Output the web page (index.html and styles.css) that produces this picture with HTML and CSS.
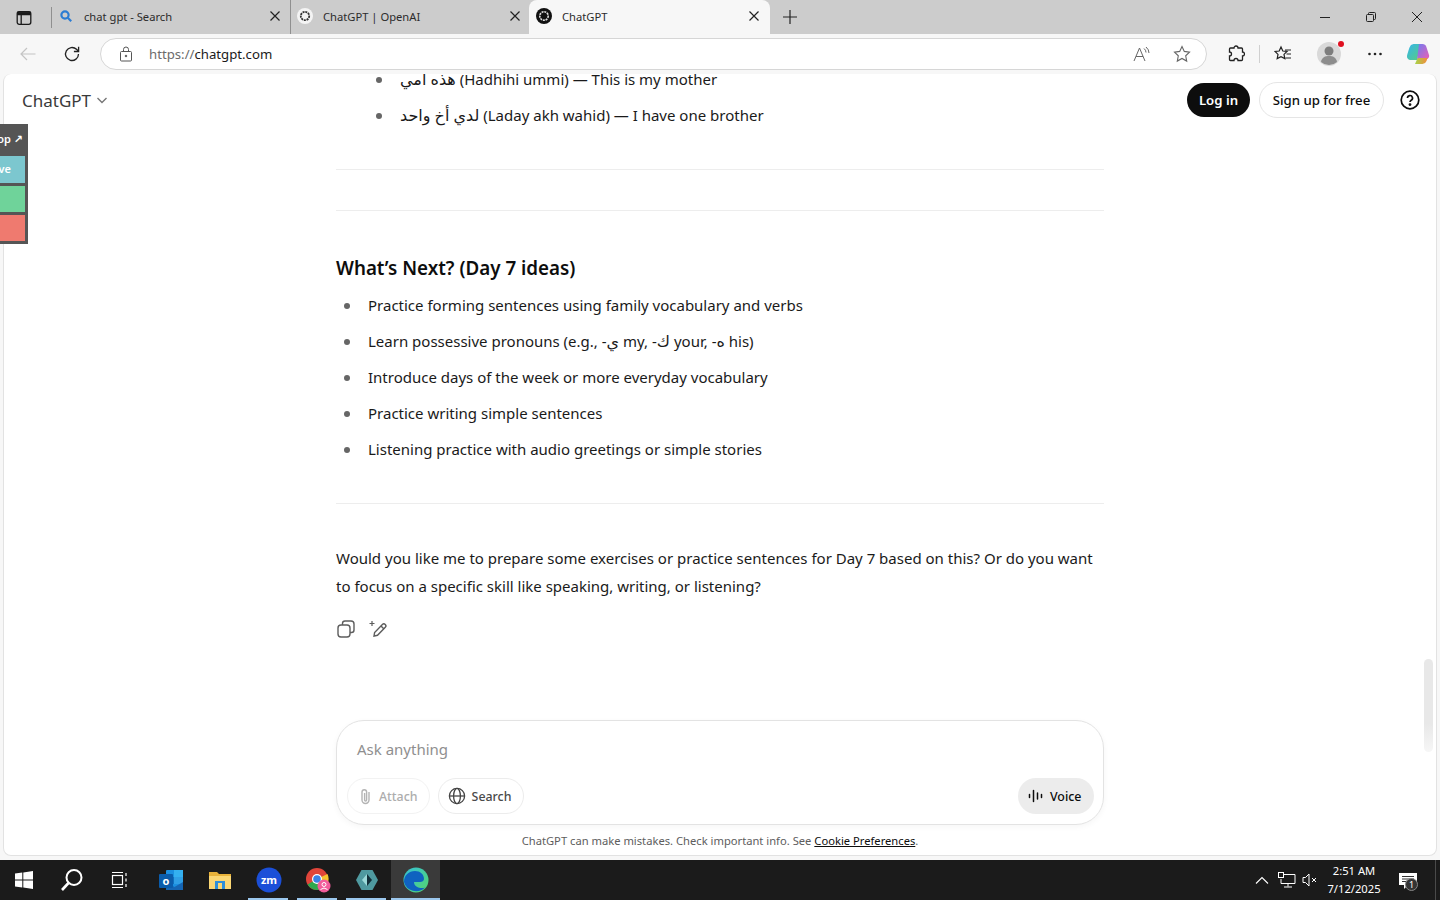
FILE: index.html
```html
<!DOCTYPE html>
<html lang="en">
<head>
    <meta charset="UTF-8">
    <meta name="viewport" content="width=device-width, initial-scale=1.0">
    <title>ChatGPT</title>
    <link rel="stylesheet" href="styles.css">
</head>
<body>

    <!-- Tab strip -->
    <div class="tabstrip">
        <div class="tab-menu">
            <svg width="16" height="16" viewBox="0 0 16 16" fill="none" stroke="#1a1a1a" stroke-width="1.3"><rect x="1.2" y="1.7" width="13.6" height="12.6" rx="2"/><path d="M1.5 4.6h13M5.2 4.6v9.5"/><path d="M2 2.2h12v2.2H2z" fill="#1a1a1a"/></svg>
        </div>
        <div class="tab">
            <svg class="favicon" width="16" height="16" viewBox="-1 -1 16 16" fill="none" stroke="#2b7cd3" stroke-width="2.2"><circle cx="6" cy="6" r="3.6"/><path d="M8.8 8.8l3.4 3.4"/></svg>
            <span class="tab-title">chat gpt - Search</span>
            <svg class="tab-close" width="10" height="10" viewBox="0 0 10 10" stroke="#222" stroke-width="1.2"><path d="M.5.5l9 9M9.500.5l-9 9"/></svg>
        </div>
        <div class="tab">
            <svg class="favicon" width="16" height="16" viewBox="0 0 16 16"><circle cx="8" cy="8" r="8" fill="#f4f4f4"/><circle cx="8" cy="8" r="4.2" fill="none" stroke="#333" stroke-width="1.8" stroke-dasharray="2 .8"/></svg>
            <span class="tab-title">ChatGPT | OpenAI</span>
            <svg class="tab-close" width="10" height="10" viewBox="0 0 10 10" stroke="#222" stroke-width="1.2"><path d="M.5.5l9 9M9.500.5l-9 9"/></svg>
        </div>
        <div class="tab tab-active">
            <svg class="favicon" width="16" height="16" viewBox="0 0 16 16"><circle cx="8" cy="8" r="8" fill="#111"/><circle cx="8" cy="8" r="4.2" fill="none" stroke="#ddd" stroke-width="1.6" stroke-dasharray="2 .8"/></svg>
            <span class="tab-title">ChatGPT</span>
            <svg class="tab-close" width="10" height="10" viewBox="0 0 10 10" stroke="#222" stroke-width="1.2"><path d="M.5.5l9 9M9.500.5l-9 9"/></svg>
        </div>
        <div class="tab-new">
            <svg width="14" height="14" viewBox="0 0 14 14" stroke="#222" stroke-width="1.2"><path d="M7 0v14M0 7h14"/></svg>
        </div>
        <div class="window-controls">
            <div class="window-btn"><svg width="10" height="10" viewBox="0 0 10 10" stroke="#222"><path d="M0 5.5h10"/></svg></div>
            <div class="window-btn"><svg width="10" height="10" viewBox="0 0 10 10" fill="none" stroke="#222"><rect x=".5" y="2.5" width="7" height="7" rx="1"/><path d="M2.5 2.5V1.5a1 1 0 0 1 1-1h5a1 1 0 0 1 1 1v5a1 1 0 0 1-1 1h-1"/></svg></div>
            <div class="window-btn"><svg width="10" height="10" viewBox="0 0 10 10" stroke="#222"><path d="M0 0l10 10M10 0L0 10"/></svg></div>
        </div>
    </div>

    <!-- Address bar -->
    <div class="toolbar">
        <div class="nav-btns">
            <svg width="16" height="16" viewBox="0 0 16 16" fill="none" stroke="#c4c4c4" stroke-width="1.2"><path d="M15.5 8H1M7 2L1 8l6 6"/></svg>
            <svg width="18" height="18" viewBox="0 0 18 18" fill="none" stroke="#222" stroke-width="1.3"><path d="M15.5 9a6.5 6.5 0 1 1-2-4.7L15.5 6.300"/><path d="M15.600 1.800v4.700h-4.700"/></svg>
        </div>
        <div class="urlbar">
            <svg class="lock" width="14" height="16" viewBox="0 0 14 16" fill="none" stroke="#555"><rect x="1.500" y="5.500" width="11" height="9.500" rx="1"/><path d="M4.500 5.500V3.500a2.500 2.500 0 0 1 5 0v2"/><circle cx="7" cy="10" r=".8" fill="#555"/></svg>
            <span class="url"><span class="url-dim">https://</span>chatgpt.com</span>
            <svg class="url-icon" width="18" height="16" viewBox="0 0 18 16" fill="none" stroke="#666"><path d="M1 15L6.500 2 12 15M3 10.500h7"/><path d="M11 2.500q2 1.500 2 4M13 1q3 2.500 3 6"/></svg>
            <svg class="url-icon" width="18" height="18" viewBox="0 0 18 18" fill="none" stroke="#666" stroke-width="1.1"><path d="M9 1.500l2.300 4.900 5.200.7-3.800 3.700 1 5.300L9 13.500l-4.700 2.600 1-5.300L1.500 7.100l5.200-.7z"/></svg>
        </div>
        <div class="tool-btns">
            <div class="tool-btn"><svg width="18" height="18" viewBox="0 0 18 18" fill="none" stroke="#222" stroke-width="1.300"><path d="M7 3a2 2 0 0 1 4 0h3.500a1 1 0 0 1 1 1v3a2 2 0 0 1 0 4v3.500a1 1 0 0 1-1 1H11a2 2 0 0 0-4 0H3.500a1 1 0 0 1-1-1V11a2 2 0 0 0 0-4V4a1 1 0 0 1 1-1z"/></svg></div>
            <div class="tool-divider"></div>
            <div class="tool-btn"><svg width="18" height="18" viewBox="0 0 18 18" fill="none" stroke="#222" stroke-width="1.200"><path d="M7 2l1.800 4 4.200.5-3 2.900.8 4.200L7 11.600l-3.800 2 .8-4.200-3-2.900L5.200 6zM11 5h6M12.500 9H17M11.500 13H17"/></svg></div>
            <div class="tool-btn">
                <div class="avatar">
                    <svg width="24" height="24" viewBox="0 0 24 24"><circle cx="12" cy="12" r="12" fill="#d9d9d9"/><circle cx="12" cy="9" r="4.500" fill="#7d7d7d"/><path d="M4 20c1-5 4-6 8-6s7 1 8 6a12 12 0 0 1-16 0z" fill="#8d8d8d"/></svg>
                    <span class="avatar-dot"></span>
                </div>
            </div>
            <div class="tool-btn"><svg width="16" height="4" viewBox="0 0 16 4" fill="#222"><circle cx="2.500" cy="2" r="1.300"/><circle cx="8" cy="2" r="1.300"/><circle cx="13.500" cy="2" r="1.300"/></svg></div>
            <div class="tool-btn tool-copilot">
                <svg width="24" height="24" viewBox="0 0 24 24">
                    <defs>
                        <linearGradient id="cpA" x1="0" y1="0" x2="1" y2="1"><stop offset="0" stop-color="#35b4ee"/><stop offset="1" stop-color="#57cf7e"/></linearGradient>
                        <linearGradient id="cpB" x1="0" y1="0" x2="1" y2="1"><stop offset="0" stop-color="#6f7bf2"/><stop offset="1" stop-color="#ec5fb3"/></linearGradient>
                        <linearGradient id="cpC" x1="0" y1="0" x2="1" y2="0"><stop offset="0" stop-color="#a5d64a"/><stop offset="1" stop-color="#f58a3c"/></linearGradient>
                    </defs>
                    <path d="M7.500 2H15l-4 16H4.500A3.500 3.500 0 0 1 1 14c.300-2 1.500-5.500 2.500-8.500A5 5 0 0 1 7.500 2z" fill="url(#cpA)"/>
                    <path d="M13 2h3.500a4 4 0 0 1 3.800 2.800L23 13a3.500 3.500 0 0 1-3.300 4.500H11z" fill="url(#cpB)"/>
                    <path d="M9 22h7.500a4.500 4.500 0 0 0 4-3l1-3H13c-1 0-1.600.5-2 1.500z" fill="url(#cpC)"/>
                </svg>
            </div>
        </div>
    </div>

    <!-- Page -->
    <main class="page">
        <header class="page-header">
            <div class="model-name">ChatGPT
                <svg width="12" height="12" viewBox="0 0 12 12" fill="none" stroke="#777" stroke-width="1.400"><path d="M1.500 4l4.500 4.500L10.500 4"/></svg>
            </div>
            <div class="auth">
                <button class="btn-login">Log in</button>
                <button class="btn-signup">Sign up for free</button>
                <svg class="help" width="20" height="20" viewBox="0 0 20 20" fill="none" stroke="#0d0d0d" stroke-width="1.700"><circle cx="10" cy="10" r="8.800"/><path d="M7.500 8a2.500 2.500 0 1 1 3.700 2.200c-.8.500-1.200 1-1.200 1.800"/><circle cx="10" cy="14.600" r=".6" fill="#0d0d0d"/></svg>
            </div>
        </header>

        <!-- Side widget from a browser extension -->
        <div class="side-widget">
            <div class="side-seg seg-dark">op &#8599;</div>
            <div class="side-seg seg-teal">ve</div>
            <div class="side-seg seg-green"></div>
            <div class="side-seg seg-red"></div>
        </div>

        <div class="thread">
            <div class="message">
                <ul class="list-nested">
                    <li><span class="ar">هذه امي</span> (Hadhihi ummi) — This is my mother</li>
                    <li><span class="ar">لدي أخ واحد</span> (Laday akh wahid) — I have one brother</li>
                </ul>
                <hr>
                <hr>
                <h3>What’s Next? (Day 7 ideas)</h3>
                <ul>
                    <li>Practice forming sentences using family vocabulary and verbs</li>
                    <li>Learn possessive pronouns (e.g., -<span class="ar">ي</span> my, -<span class="ar">ك</span> your, -<span class="ar">ه</span> his)</li>
                    <li>Introduce days of the week or more everyday vocabulary</li>
                    <li>Practice writing simple sentences</li>
                    <li>Listening practice with audio greetings or simple stories</li>
                </ul>
                <hr>
                <p>Would you like me to prepare some exercises or practice sentences for Day 7 based on this? Or do you want to focus on a specific skill like speaking, writing, or listening?</p>
                <div class="message-actions">
                    <svg width="20" height="20" viewBox="0 0 20 20" fill="none" stroke="#5d5d5d" stroke-width="1.400"><rect x="2" y="6" width="12" height="12" rx="3"/><path d="M6.500 6V4.500A2.500 2.500 0 0 1 9 2h6a3 3 0 0 1 3 3v6a2.500 2.500 0 0 1-2.500 2.500H14"/></svg>
                    <svg width="20" height="20" viewBox="0 0 20 20" fill="none" stroke="#5d5d5d" stroke-width="1.400"><path d="M6 17l.6-3.500 7.800-8a2 2 0 0 1 2.900 2.800l-7.800 8z"/><path d="M13 7l3 3"/><path d="M4 2v5M1.500 4.500h5" stroke-width="1.200"/></svg>
                </div>
            </div>
        </div>

        <div class="composer-wrap">
            <form class="composer">
                <div class="composer-input">Ask anything</div>
                <div class="composer-row">
                    <button type="button" class="chip chip-off">
                        <svg width="18" height="18" viewBox="0 0 18 18" fill="none" stroke="#b4b4b4" stroke-width="1.400"><path d="M12 5v8a3.500 3.500 0 0 1-7 0V5a2.300 2.300 0 0 1 4.600 0v8a1 1 0 0 1-2 0V6"/></svg>
                        Attach
                    </button>
                    <button type="button" class="chip chip-search">
                        <svg width="18" height="18" viewBox="0 0 18 18" fill="none" stroke="#444" stroke-width="1.300"><circle cx="9" cy="9" r="7.600"/><ellipse cx="9" cy="9" rx="3.400" ry="7.600"/><path d="M1.500 9h15"/></svg>
                        Search
                    </button>
                    <button type="button" class="chip-voice">
                        <svg width="16" height="16" viewBox="0 0 16 16" stroke="#0d0d0d" stroke-width="1.500" stroke-linecap="round"><path d="M1.500 6.500v3M5.500 2.500v11M9.500 5v6M13.500 6.500v3"/></svg>
                        Voice
                    </button>
                </div>
            </form>
            <div class="disclaimer">ChatGPT can make mistakes. Check important info. See <a href="#">Cookie Preferences</a>.</div>
        </div>

        <div class="scroll-thumb"></div>
    </main>

    <!-- Windows taskbar -->
    <footer class="taskbar">
        <div class="task-item">
            <svg width="18" height="18" viewBox="0 0 18 18" fill="#fff"><path d="M0 2.600l7.300-1v7H0zM8.300 1.400L18 0v8.600H8.300zM0 9.500h7.300v7L0 15.400zM8.300 9.500H18V18l-9.700-1.400z"/></svg>
        </div>
        <div class="task-item">
            <svg width="24" height="24" viewBox="0 0 24 24" fill="none" stroke="#fff" stroke-width="2"><circle cx="14" cy="9.500" r="7.500"/><path d="M8.500 15L2 22" stroke-width="2.600"/></svg>
        </div>
        <div class="task-item">
            <svg width="18" height="18" viewBox="0 0 18 18" fill="none" stroke="#fff" stroke-width="1.200"><rect x="1.500" y="4.500" width="10" height="9"/><path d="M1 1.500h11M1 16.500h11M15 2v3M15 7.500v3M15 13v3" /></svg>
        </div>
        <div class="task-apps">
            <div class="task-item task-app">
                <svg width="26" height="26" viewBox="0 0 26 26"><rect x="8" y="3" width="17" height="20" rx="1" fill="#1b8fe0"/><rect x="16" y="3" width="9" height="7" fill="#34b0f0"/><rect x="8" y="10" width="8" height="7" fill="#0f6fbe"/><rect x="16" y="10" width="9" height="7" fill="#2f9fe6"/><path d="M8 15l8.500 5 8.500-5v8H8z" fill="#1565b3"/><rect x="1" y="7" width="14" height="14" rx="1" fill="#0a5cab"/><text x="8" y="18" class="outlook-o">o</text></svg>
            </div>
            <div class="task-item task-app">
                <svg width="24" height="22" viewBox="0 0 24 22"><path d="M1 3h8l2 2h12v15H1z" fill="#e8b23a"/><path d="M1 7h22v13H1z" fill="#fbd774"/><rect x="7" y="12" width="10" height="8" fill="#2f8fd8"/><rect x="10" y="14" width="4" height="6" fill="#fbd774"/></svg>
            </div>
            <div class="task-item task-app">
                <svg width="26" height="26" viewBox="0 0 26 26"><circle cx="13" cy="13" r="12.500" fill="#1b4fd8"/><text x="13" y="17" class="zoom-text">zm</text></svg>
            </div>
            <div class="task-item task-app">
                <svg width="28" height="28" viewBox="0 0 28 28"><circle cx="13" cy="13" r="11" fill="#e0453a"/><path d="M13 13L3.500 18.500A11 11 0 0 0 16 23.600z" fill="#2fa84f"/><path d="M13 13l3 10.600A11 11 0 0 0 23.500 8z" fill="#f7c32e"/><circle cx="13" cy="13" r="5" fill="#fff"/><circle cx="13" cy="13" r="3.800" fill="#3b82e6"/><circle cx="20" cy="20" r="6.500" fill="#f25c9b"/><circle cx="20" cy="18.500" r="2" fill="none" stroke="#fff"/><path d="M16.500 23.500q3.500-3 7 0" fill="none" stroke="#fff"/></svg>
            </div>
            <div class="task-item task-app">
                <svg width="24" height="24" viewBox="0 0 24 24"><path d="M6.500 2h11L23 12l-5.500 10h-11L1 12z" fill="#4f9aa0"/><path d="M12 6l5 6-5 6z" fill="#12303a"/><path d="M12 6l-5 6 5 6z" fill="#9bd9d8"/></svg>
            </div>
            <div class="task-item task-app task-active">
                <svg width="26" height="26" viewBox="0 0 26 26"><defs><linearGradient id="edgeA" x1="0" y1="0" x2="1" y2="1"><stop offset="0" stop-color="#35c1d8"/><stop offset="1" stop-color="#54d66c"/></linearGradient></defs><circle cx="13" cy="13" r="12.500" fill="url(#edgeA)"/><path d="M1 15C1 8 6 4 12 4c5 0 9 3 9 8 0 2-2 3-4 3H11c0 4 4 6 8 6 1 0 2 0 3-.500A12.500 12.500 0 0 1 1 15z" fill="#0f62c0"/></svg>
            </div>
        </div>
        <div class="tray">
            <svg class="tray-chevron" width="14" height="8" viewBox="0 0 14 8" fill="none" stroke="#fff" stroke-width="1.100"><path d="M1 7.500l6-6 6 6"/></svg>
            <svg class="tray-net" width="18" height="16" viewBox="0 0 18 16" fill="none" stroke="#fff"><path d="M5 2.500h12v9H3V7M10 11.500v3M6 15h8"/><rect x=".5" y=".5" width="5" height="5" fill="#1a1a1a"/></svg>
            <svg class="tray-vol" width="16" height="14" viewBox="0 0 16 14" fill="none" stroke="#fff"><path d="M1 4.500h2.500L7 1v12L3.500 9.500H1zM10 5l4 4M14 5l-4 4"/></svg>
            <div class="clock">
                <div>2:51 AM</div>
                <div>7/12/2025</div>
            </div>
            <div class="notify">
                <svg width="18" height="16" viewBox="0 0 18 16"><path d="M0 0h18v12h-9l-4 4v-4H0z" fill="#fff"/><path d="M3 3.500h12M3 6h12M3 8.500h8" stroke="#333"/></svg>
                <span class="notify-badge">1</span>
            </div>
        </div>
    </footer>

</body>
</html>
```

FILE: styles.css
```css
/* Global Styles */
* {
    margin: 0;
    padding: 0;
    box-sizing: border-box;
}

html, body {
    height: 100%;
    overflow: hidden;
}

body {
    display: flex;
    flex-direction: column;
    background: #f7f7f7;
    color: #0d0d0d;
    font-family: "Noto Sans", "DejaVu Sans", sans-serif;
}

button {
    font-family: inherit;
    background: none;
    border: none;
}

/* Tab strip */
.tabstrip {
    display: flex;
    flex: 0 0 34px;
    background: #cccccc;
    font-size: 11.2px;
}

.tab-menu {
    width: 52px;
    padding-left: 16px;
    display: flex;
    align-items: center;
    border-right: 1px solid #8f8f8f;
    margin: 7px 0 6px;
}

.tab {
    width: 239px;
    display: flex;
    align-items: center;
    padding: 0 10px 2px 6px;
    color: #2b2b2b;
    position: relative;
}

.tab:nth-child(2) {
    border-right: 1px solid #8f8f8f;
}

.tab .favicon {
    margin-right: 10px;
}

.tab-title {
    flex: 1;
}

.tab-active {
    width: 241px;
    margin-left: -1px;
    background: #f7f7f7;
    border-radius: 8px 8px 0 0;
    padding-left: 7px;
    padding-right: 11px;
}

.tab-new {
    width: 40px;
    display: flex;
    align-items: center;
    justify-content: center;
}

.window-controls {
    margin-left: auto;
    display: flex;
}

.window-btn {
    width: 46px;
    display: flex;
    align-items: center;
    justify-content: center;
}

/* Address bar */
.toolbar {
    flex: 0 0 40px;
    display: flex;
    align-items: flex-start;
    padding-top: 4px;
}

.nav-btns {
    width: 100px;
    height: 32px;
    padding-left: 20px;
    display: flex;
    align-items: center;
    gap: 27px;
}

.urlbar {
    flex: none;
    width: 1107px;
    height: 32px;
    background: #fff;
    border: 1px solid #d6d6d6;
    border-radius: 16px;
    display: flex;
    align-items: center;
    padding-left: 18px;
    padding-right: 15px;
    gap: 22px;
}

.url {
    flex: 1;
    font-size: 13.2px;
    color: #1a1a1a;
    margin-left: -6px;
}

.url-dim {
    color: #6b6b6b;
}

.tool-btns {
    flex: 1;
    height: 32px;
    display: flex;
    align-items: center;
    padding-left: 6px;
}

.tool-btn {
    width: 46px;
    display: flex;
    justify-content: center;
    align-items: center;
}

.tool-copilot {
    width: 40px;
}

.tool-divider {
    width: 1px;
    height: 18px;
    background: #d0d0d0;
}

.avatar {
    position: relative;
    width: 24px;
    height: 24px;
}

.avatar-dot {
    position: absolute;
    top: -1px;
    right: -3px;
    width: 6px;
    height: 6px;
    border-radius: 50%;
    background: #e01020;
}

/* Page */
.page {
    flex: 1;
    min-height: 0;
    position: relative;
    margin: 0 3px 4px;
    background: #fff;
    border: 1px solid #e2e2e2;
    border-top: none;
    border-radius: 8px;
    display: flex;
    flex-direction: column;
}

.page-header {
    position: absolute;
    top: 8px;
    left: 18px;
    right: 16px;
    display: flex;
    justify-content: space-between;
    align-items: center;
    z-index: 2;
}

.model-name {
    font-size: 17px;
    color: #3a3a3a;
    display: flex;
    align-items: center;
    gap: 5px;
}

.auth {
    display: flex;
    align-items: center;
}

.btn-login {
    width: 63px;
    height: 34px;
    border-radius: 17px;
    background: #0d0d0d;
    color: #fff;
    font-size: 13.2px;
    font-weight: 600;
}

.btn-signup {
    width: 125px;
    height: 36px;
    margin-left: 9px;
    margin-right: 16px;
    border-radius: 18px;
    border: 1px solid #e5e5e5;
    color: #0d0d0d;
    font-size: 13.2px;
    font-weight: 500;
}

.side-widget {
    position: absolute;
    top: 50px;
    left: -4px;
    width: 28px;
    height: 120px;
    background: #555;
    padding: 3px 3px 3px 0;
    display: flex;
    flex-direction: column;
    gap: 3px;
    z-index: 2;
    overflow: hidden;
}

.side-seg {
    flex: none;
    height: 26.25px;
    display: flex;
    justify-content: flex-end;
    align-items: center;
    padding-right: 2px;
    font-size: 11px;
    font-weight: 600;
    color: #fff;
    white-space: nowrap;
}

.seg-dark { padding-bottom: 3px; }
.seg-teal { background: #7cc7cf; padding-right: 14px; padding-bottom: 2px; }
.seg-green { background: #6fd39a; }
.seg-red { background: #ef7a6f; }

.scroll-thumb {
    position: absolute;
    top: 585px;
    right: 3px;
    width: 9px;
    height: 93px;
    border-radius: 5px;
    background: linear-gradient(#e8e8e8 70%, #f6f6f6);
}

/* Conversation */
.thread {
    flex: 1;
    min-height: 0;
    display: flex;
    flex-direction: column;
    justify-content: flex-end;
    overflow: hidden;
}

.message {
    width: 768px;
    margin: 0 auto;
    padding-bottom: 81px;
    font-size: 15px;
    line-height: 28px;
    color: #1a1a1a;
}

.message .ar {
    font-size: 16px;
}

.message ul {
    padding-left: 32px;
    list-style: none;
}

.message ul.list-nested {
    padding-left: 64px;
}

.message li {
    position: relative;
    margin-top: 8px;
}

.message li:first-child {
    margin-top: 0;
}

.message li::before {
    content: "";
    position: absolute;
    left: -24px;
    top: 12px;
    width: 6px;
    height: 6px;
    border-radius: 50%;
    background: #666;
}

.message hr {
    border: none;
    border-top: 1px solid #ededed;
    margin: 40px 0;
}

.message hr + hr {
    margin-top: 0;
}

.message h3 {
    font-size: 18.8px;
    line-height: 30px;
    font-weight: 600;
    margin-top: 42px;
    margin-bottom: 8px;
    color: #0d0d0d;
}

.message p {
    margin-top: 40px;
}

.message-actions {
    display: flex;
    gap: 12px;
    margin-top: 19px;
}

/* Composer */
.composer-wrap {
    flex: 0 0 135px;
    min-height: 0;
    width: 768px;
    margin: 0 auto;
}

.composer {
    height: 105px;
    border: 1px solid #e3e3e3;
    border-radius: 28px;
    box-shadow: 0 2px 6px rgba(0, 0, 0, 0.04);
    padding: 0 9px 10px 10px;
    display: flex;
    flex-direction: column;
}

.composer-input {
    flex: 1;
    padding: 15px 10px 0;
    font-size: 15px;
    line-height: 26px;
    color: #8f8f8f;
}

.composer-row {
    display: flex;
    align-items: center;
    gap: 8px;
}

.chip {
    height: 36px;
    padding: 0 12px 0 9px;
    display: flex;
    align-items: center;
    gap: 4px;
    border: 1px solid #ececec;
    border-radius: 18px;
    font-size: 12.4px;
    font-weight: 500;
    color: #4a4a4a;
}

.chip-off {
    color: #adadad;
    border-color: #f2f2f2;
    padding-right: 11px;
}

.chip-search {
    gap: 6px;
}

.chip-voice {
    margin-left: auto;
    width: 76px;
    height: 36px;
    padding-left: 10px;
    display: flex;
    align-items: center;
    gap: 6px;
    background: #ececec;
    border-radius: 18px;
    font-size: 12.4px;
    font-weight: 500;
    color: #0d0d0d;
}

.disclaimer {
    text-align: center;
    font-size: 11.2px;
    line-height: 32px;
    color: #5d5d5d;
}

.disclaimer a {
    color: #0d0d0d;
}

/* Windows taskbar */
.taskbar {
    flex: 0 0 40px;
    background: #1b1b1b;
    display: flex;
    align-items: stretch;
    color: #fff;
}

.task-item {
    width: 48px;
    display: flex;
    align-items: center;
    justify-content: center;
}

.task-apps {
    display: flex;
    padding-left: 2px;
}

.task-app {
    width: 49px;
    position: relative;
}

.task-app::after {
    content: "";
    position: absolute;
    left: 4px;
    right: 5px;
    bottom: 0;
    height: 2px;
    background: #9cc8ee;
}

.task-app:nth-child(-n+2)::after {
    display: none;
}

.task-active {
    background: #3a3a3a;
}

.task-active::after {
    left: 0;
    right: 0;
}

.outlook-o {
    font: 700 11px "Noto Sans", sans-serif;
    fill: #fff;
    text-anchor: middle;
}

.zoom-text {
    font: 700 11px "Noto Sans", sans-serif;
    fill: #fff;
    text-anchor: middle;
}

.tray {
    margin-left: auto;
    margin-right: 4px;
    padding-right: 18px;
    border-right: 1px solid #4a4a4a;
    display: flex;
    align-items: center;
}

.tray-net {
    margin-left: 9px;
}

.tray-vol {
    margin-left: 6px;
}

.clock {
    width: 66px;
    margin-left: 3px;
    text-align: center;
    font-size: 11.2px;
    line-height: 18px;
}

.notify {
    position: relative;
    margin-left: 12px;
    width: 18px;
    height: 16px;
}

.notify-badge {
    position: absolute;
    top: 6px;
    left: 6px;
    width: 13px;
    height: 13px;
    border-radius: 50%;
    background: #333;
    border: 1px solid #888;
    font-size: 9px;
    line-height: 11px;
    text-align: center;
}
```
